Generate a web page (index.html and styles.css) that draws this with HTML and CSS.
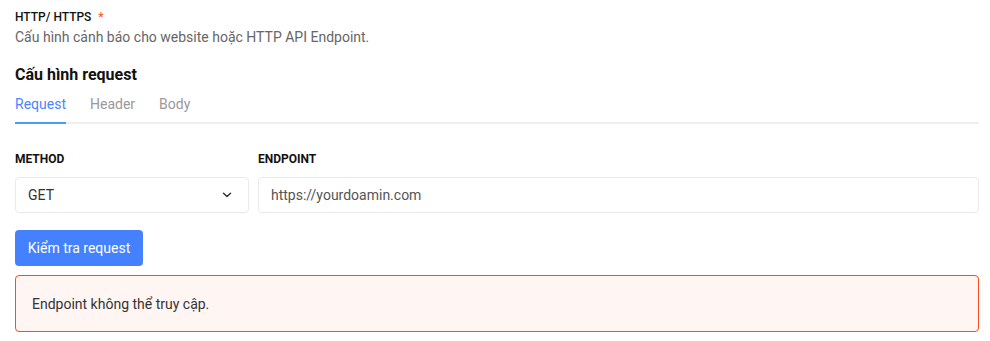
FILE: index.html
```html
<!DOCTYPE html>
<html lang="vi">
<head>
<meta charset="utf-8">
<link rel="stylesheet" href="styles.css">
</head>
<body>
<div class="page">
  <div class="field-title">HTTP/ HTTPS <span class="req">*</span></div>
  <div class="desc">Cấu hình cảnh báo cho website hoặc HTTP API Endpoint.</div>
  <h2 class="heading">Cấu hình request</h2>
  <div class="tabs">
    <div class="tab active">Request</div>
    <div class="tab">Header</div>
    <div class="tab">Body</div>
  </div>
  <div class="row">
    <div class="col-method">
      <div class="label">METHOD</div>
      <div class="select">
        <span>GET</span>
        <svg width="10" height="6" viewBox="0 0 10 6"><path d="M1.5 1.2 L5 4.5 L8.5 1.2" fill="none" stroke="#333" stroke-width="1.5" stroke-linecap="round" stroke-linejoin="round"/></svg>
      </div>
    </div>
    <div class="col-endpoint">
      <div class="label">ENDPOINT</div>
      <div class="input">https://yourdoamin.com</div>
    </div>
  </div>
  <button class="btn">Kiểm tra request</button>
  <div class="alert">Endpoint không thể truy cập.</div>
</div>
</body>
</html>
```
FILE: styles.css
```css
* { box-sizing: border-box; }
html, body { margin: 0; padding: 0; background: #fff; }
body { font-family: Roboto, "Noto Sans", sans-serif; color: #111; }
.page { padding: 9px 11px 0 15px; }
.field-title { font-size: 12px; line-height: 16px; font-weight: 500; color: #111; }
.req { color: #ff5a2d; margin-left: 4px; }
.desc { margin-top: 2px; font-size: 14px; line-height: 20px; color: #666; }
.heading { margin: 17px 0 0; font-size: 16px; line-height: 22px; font-weight: 700; color: #111; }
.tabs { margin-top: 8px; display: flex; gap: 24px; border-bottom: 2px solid #eeeeee; }
.tab { font-size: 14px; line-height: 20px; padding-bottom: 8px; color: #999; margin-bottom: -2px; border-bottom: 2px solid transparent; }
.tab.active { color: #4a86ff; border-bottom-color: #4a9cff; }
.row { display: flex; gap: 9px; margin-top: 27px; }
.col-method { width: 234px; }
.col-endpoint { flex: 1; }
.label { font-size: 12px; line-height: 16px; font-weight: 700; color: #111; margin-bottom: 10px; }
.select, .input { height: 36px; border: 1px solid #eaeaea; border-radius: 4px; display: flex; align-items: center; font-size: 14px; }
.select { padding: 0 16px 0 12px; justify-content: space-between; color: #333; }
.input { padding: 0 12px; color: #555; }
.btn { display: block; margin-top: 17px; height: 36px; width: 128px; border: none; border-radius: 4px; background: #4381ff; color: #fff; font-family: inherit; font-size: 14px; padding: 0; }
.alert { margin-top: 9px; height: 57px; border: 1px solid #ff4a1c; border-radius: 4px; background: #fff5f3; display: flex; align-items: center; padding: 0 16px; font-size: 14px; color: #333; }
```
